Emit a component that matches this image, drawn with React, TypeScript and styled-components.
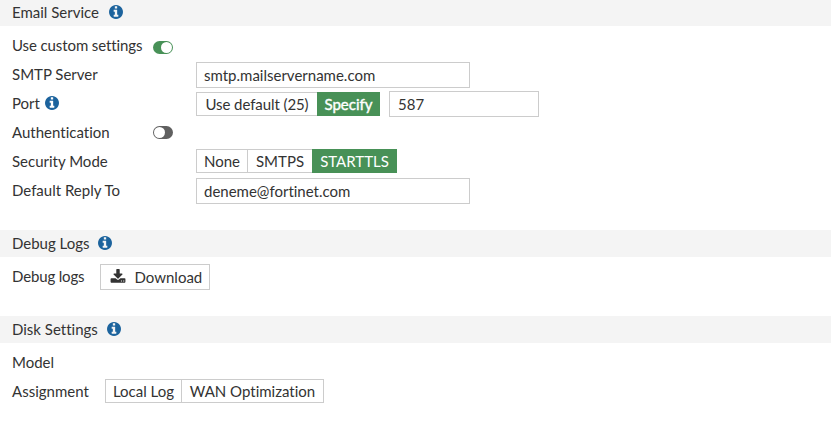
import React from 'react';
import styled, { createGlobalStyle } from 'styled-components';

const GlobalStyle = createGlobalStyle`
  * { box-sizing: border-box; }
  body {
    margin: 0;
    background: #fff;
    color: #333;
    font: 15px/18px Lato, "Liberation Sans", sans-serif;
    font-variant-ligatures: none;
  }
  button, input, h2 { font-variant-ligatures: none !important; }
`;

const Page = styled.main`
  display: flex;
  flex-direction: column;
  gap: 24px;
  height: 424px;
  overflow: hidden;
`;

const Section = styled.section``;

const SectionHeader = styled.h2<{ $height?: number; $gap?: number }>`
  display: flex;
  align-items: center;
  gap: ${(p) => p.$gap ?? 10}px;
  height: ${(p) => p.$height ?? 27}px;
  margin: 0 0 6px;
  padding: 0 0 2px 12px;
  background: #f4f4f4;
  font: inherit;
`;

const Row = styled.div`
  display: flex;
  align-items: flex-start;
  height: 29px;
  padding: 1px 0 0 12px;
`;

const Label = styled.div<{ $width: number; $tracking?: number }>`
  display: flex;
  flex: none;
  align-items: center;
  gap: 5px;
  width: ${(p) => p.$width}px;
  height: 23px;
  letter-spacing: ${(p) => p.$tracking ?? 0}px;
  white-space: nowrap;
`;

const Input = styled.input<{ $width: number; $inset?: number }>`
  width: ${(p) => p.$width}px;
  height: 26px;
  margin: 0;
  padding: 0 ${(p) => p.$inset ?? 7}px 1px;
  border: 1px solid #ccc;
  border-radius: 0;
  background: #fff;
  color: #333;
  font: inherit;
  outline: none;
`;

const Segments = styled.div<{ $offset?: number }>`
  display: flex;
  height: 24px;
  margin: ${(p) => p.$offset ?? 0}px 9px 0 0;
`;

const Segment = styled.button<{
  $width: number;
  $active?: boolean;
  $strong?: boolean;
  $tracking?: number;
}>`
  width: ${(p) => p.$width}px;
  padding: 0;
  border: 1px solid ${(p) => (p.$active ? '#489157' : '#ccc')};
  background: ${(p) => (p.$active ? '#489157' : '#fff')};
  color: ${(p) => (p.$active ? '#fff' : '#333')};
  font: inherit;
  letter-spacing: ${(p) => p.$tracking ?? 0}px;
  white-space: nowrap;
  -webkit-text-stroke: ${(p) => (p.$strong ? '0.4px #fff' : '0')};
  & + & { margin-left: -1px; }
`;

const Switch = styled.button<{ $on?: boolean }>`
  display: flex;
  justify-content: ${(p) => (p.$on ? 'flex-end' : 'flex-start')};
  width: 20px;
  height: 13px;
  margin-top: ${(p) => (p.$on ? 8 : 6)}px;
  padding: 1px;
  border: 0;
  border-radius: 7px;
  background: ${(p) => (p.$on ? '#489157' : '#606060')};
`;

const Knob = styled.span`
  width: 11px;
  height: 11px;
  border-radius: 50%;
  background: #fff;
`;

const DownloadButton = styled.button`
  display: flex;
  align-items: center;
  gap: 9px;
  width: 110px;
  height: 26px;
  padding: 0 0 0 9px;
  border: 1px solid #ccc;
  background: #fff;
  color: #333;
  font: inherit;
`;

const InfoSvg = styled.svg`
  display: block;
  flex: none;
  width: 14px;
  height: 14px;
  fill: #1c639d;
`;

const DownloadSvg = styled.svg`
  display: block;
  flex: none;
  width: 16px;
  height: 16px;
  margin: 0 0 1px -0.5px;
  fill: #333;
`;

const InfoIcon = () => (
  <InfoSvg viewBox="0 128 1536 1536" aria-hidden="true">
    <path d="M1024 1376v-160q0-14-9-23t-23-9h-96v-512q0-14-9-23t-23-9h-320q-14 0-23 9t-9 23v160q0 14 9 23t23 9h96v320h-96q-14 0-23 9t-9 23v160q0 14 9 23t23 9h448q14 0 23-9t9-23zm-128-896v-192q0-14-9-23t-23-9h-192q-14 0-23 9t-9 23v192q0 14 9 23t23 9h192q14 0 23-9t9-23zm640 416q0 209-103 385.5t-279.5 279.5-385.5 103-385.5-103-279.5-279.5-103-385.5 103-385.5 279.5-279.5 385.5-103 385.5 103 279.5 279.5 103 385.5z" />
  </InfoSvg>
);

const DownloadIcon = () => (
  <DownloadSvg viewBox="0 0 1792 1792" aria-hidden="true">
    <path d="M1344 1344q0-26-19-45t-45-19-45 19-19 45 19 45 45 19 45-19 19-45zm256 0q0-26-19-45t-45-19-45 19-19 45 19 45 45 19 45-19 19-45zm128-224v320q0 40-28 68t-68 28h-1472q-40 0-68-28t-28-68v-320q0-40 28-68t68-28h465l135 136q58 56 136 56t136-56l136-136h464q40 0 68 28t28 68zm-325-569q17 41-14 70l-448 448q-18 19-45 19t-45-19l-448-448q-31-29-14-70 17-39 59-39h256v-448q0-26 19-45t45-19h256q26 0 45 19t19 45v448h256q42 0 59 39z" />
  </DownloadSvg>
);

export default function App() {
  return (
    <>
      <GlobalStyle />
      <Page>
        <Section>
          <SectionHeader $height={26} $gap={10}>Email Service <InfoIcon /></SectionHeader>
          <Row>
            <Label $width={141} $tracking={-0.1}>Use custom settings</Label>
            <Switch $on aria-label="Use custom settings"><Knob /></Switch>
          </Row>
          <Row>
            <Label $width={184}>SMTP Server</Label>
            <Input $width={274} defaultValue="smtp.mailservername.com" />
          </Row>
          <Row>
            <Label $width={184}>Port <InfoIcon /></Label>
            <Segments $offset={1}>
              <Segment $width={122} $tracking={-0.08}>Use default (25)</Segment>
              <Segment $width={63} $active $strong>Specify</Segment>
            </Segments>
            <Input $width={150} $inset={8} defaultValue="587" />
          </Row>
          <Row>
            <Label $width={141}>Authentication</Label>
            <Switch aria-label="Authentication"><Knob /></Switch>
          </Row>
          <Row>
            <Label $width={184}>Security Mode</Label>
            <Segments>
              <Segment $width={52}>None</Segment>
              <Segment $width={66}>SMTPS</Segment>
              <Segment $width={85} $active>STARTTLS</Segment>
            </Segments>
          </Row>
          <Row>
            <Label $width={184}>Default Reply To</Label>
            <Input $width={274} defaultValue="deneme@fortinet.com" />
          </Row>
        </Section>
        <Section>
          <SectionHeader $gap={8}>Debug Logs <InfoIcon /></SectionHeader>
          <Row>
            <Label $width={88} $tracking={-0.15}>Debug logs</Label>
            <DownloadButton><DownloadIcon />Download</DownloadButton>
          </Row>
        </Section>
        <Section>
          <SectionHeader $gap={9}>Disk Settings <InfoIcon /></SectionHeader>
          <Row>
            <Label $width={93}>Model</Label>
          </Row>
          <Row>
            <Label $width={93}>Assignment</Label>
            <Segments>
              <Segment $width={77}>Local Log</Segment>
              <Segment $width={143}>WAN Optimization</Segment>
            </Segments>
          </Row>
        </Section>
      </Page>
    </>
  );
}
